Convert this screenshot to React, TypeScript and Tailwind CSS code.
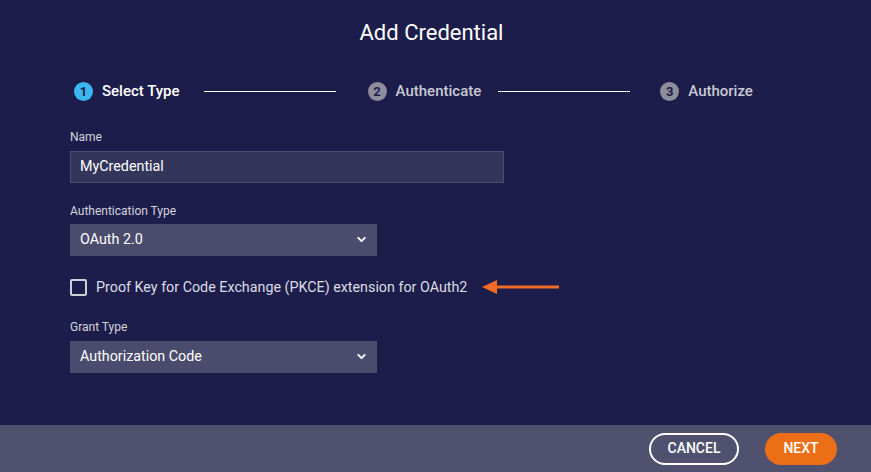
import { ChevronDown } from "lucide-react";

const font = { fontFamily: "Roboto, 'Noto Sans', sans-serif" };

const Step = ({ n, label, active }: { n: number; label: string; active?: boolean }) => (
  <div className="flex items-center gap-[9px]">
    <span
      className={
        "flex h-[19px] w-[19px] items-center justify-center rounded-full text-[13px] font-bold text-[#1c1d4a] " +
        (active ? "bg-[#3cb6ee]" : "bg-[#8d8d9c]")
      }
    >
      {n}
    </span>
    <span className={"text-[15px] font-medium " + (active ? "text-white" : "text-[#c9c9d3]")}>{label}</span>
  </div>
);

const SelectBox = ({ value }: { value: string }) => (
  <div className="flex h-[32px] w-[307px] items-center justify-between bg-[#4a4b6d] pl-[10px] pr-[9px] text-[14.3px] text-white">
    <span>{value}</span>
    <ChevronDown size={13} strokeWidth={3.5} className="text-white" />
  </div>
);

export default function App() {
  return (
    <div className="flex h-[472px] w-[871px] flex-col bg-[#1c1d4a]" style={font}>
      <div className="flex-1">
        <h1 className="pr-[8px] pt-[16px] text-center text-[22px] text-white">Add Credential</h1>

        {/* steps */}
        <div className="mt-[31px] flex items-center pl-[74px]">
          <Step n={1} label="Select Type" active />
          <div className="ml-[24px] mr-[32px] h-[1px] w-[132px] bg-white" />
          <Step n={2} label="Authenticate" />
          <div className="ml-[17px] mr-[30px] h-[1px] w-[132px] bg-white" />
          <Step n={3} label="Authorize" />
        </div>

        <div className="pl-[70px]">
          <label className="mt-[25px] block text-[12px] text-[#d4d4dd]">Name</label>
          <div className="mt-[5px] flex h-[32px] w-[434px] items-center border border-[#4b4d70] bg-[#33355a] pl-[9px] text-[14.3px] text-white">
            MyCredential
          </div>

          <label className="mt-[19px] block text-[12px] text-[#d4d4dd]">Authentication Type</label>
          <div className="mt-[4px]">
            <SelectBox value="OAuth 2.0" />
          </div>

          <div className="mt-[21px] flex items-center">
            <span className="h-[17px] w-[17px] rounded-[2px] border-2 border-[#d0d0d8]" />
            <span className="ml-[9px] text-[14.3px] text-[#dcdce4]">
              Proof Key for Code Exchange (PKCE) extension for OAuth2
            </span>
            <svg width="77" height="16" viewBox="0 0 77 16" className="ml-[15px]">
              <path d="M0 8 L15 1 L15 15 Z" fill="#f26b26" />
              <rect x="12" y="6.5" width="65" height="3" fill="#f26b26" />
            </svg>
          </div>

          <label className="mt-[20px] block text-[12px] text-[#d4d4dd]">Grant Type</label>
          <div className="mt-[5px]">
            <SelectBox value="Authorization Code" />
          </div>
        </div>
      </div>

      {/* footer */}
      <div className="flex h-[47px] items-center justify-end gap-[26px] bg-[#4f516f] pr-[34px]">
        <button className="h-[32px] w-[90px] rounded-full border-2 border-white text-[14px] font-medium text-white">
          CANCEL
        </button>
        <button className="h-[32px] w-[72px] rounded-full bg-[#ec6f17] text-[14px] font-medium text-white">
          NEXT
        </button>
      </div>
    </div>
  );
}
